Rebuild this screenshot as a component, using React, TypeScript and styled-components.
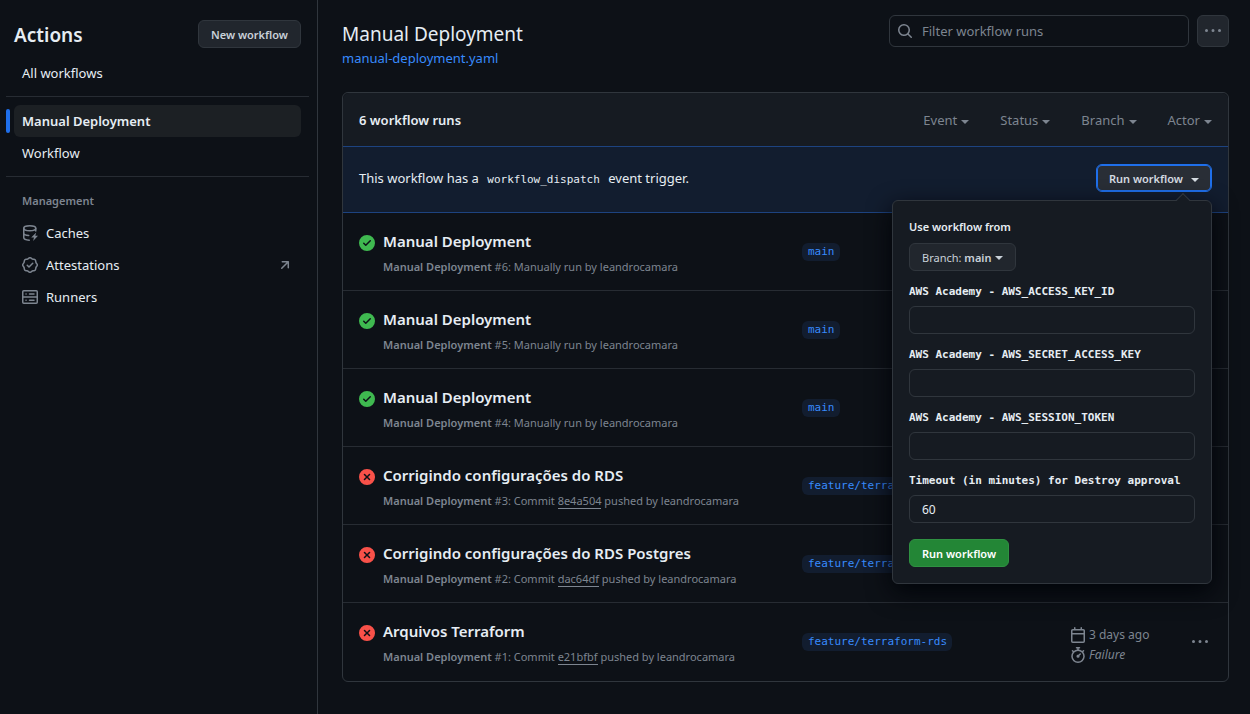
import React from "react";
import styled, { createGlobalStyle, css } from "styled-components";

const color = {
  canvas: "#0d1117",
  subtle: "#161b22",
  control: "#21262d",
  border: "#30363d",
  divider: "#272c33",
  text: "#e6edf3",
  muted: "#7d8590",
  accent: "#1f6feb",
  link: "#388bfd",
  accentBg: "#121d2f",
  accentBorder: "#1d4380",
  success: "#3fb950",
  danger: "#f85149",
};

const sans = `"Noto Sans", "Open Sans", sans-serif`;
const mono = `"DejaVu Sans Mono", "Liberation Mono", monospace`;

const GlobalStyle = createGlobalStyle`
  *, *::before, *::after { box-sizing: border-box; }
  body {
    margin: 0;
    background: ${color.canvas};
    color: ${color.text};
    font: 13px/20px ${sans};
  }
  button, input { font-family: inherit; color: inherit; margin: 0; }
  h1, h2, h3, p, ul { margin: 0; padding: 0; font-weight: 400; }
  ul { list-style: none; }
  a { color: inherit; text-decoration: none; }
  svg { display: block; flex: none; fill: currentColor; }
`;

/* ---------- icons ---------- */

const paths = {
  search:
    "M10.68 11.74a6 6 0 0 1-7.922-8.982 6 6 0 0 1 8.982 7.922l3.04 3.04a.749.749 0 0 1-.326 1.275.749.749 0 0 1-.734-.215ZM11.5 7a4.499 4.499 0 1 0-8.997 0A4.499 4.499 0 0 0 11.5 7Z",
  kebab:
    "M8 9a1.5 1.5 0 1 0 0-3 1.5 1.5 0 0 0 0 3ZM1.5 9a1.5 1.5 0 1 0 0-3 1.5 1.5 0 0 0 0 3Zm13 0a1.5 1.5 0 1 0 0-3 1.5 1.5 0 0 0 0 3Z",
  success:
    "M8 16A8 8 0 1 1 8 0a8 8 0 0 1 0 16Zm3.78-9.72a.751.751 0 0 0-.018-1.042.751.751 0 0 0-1.042-.018L6.75 9.19 5.28 7.72a.751.751 0 0 0-1.042.018.751.751 0 0 0-.018 1.042l2 2a.75.75 0 0 0 1.06 0Z",
  failure:
    "M2.343 13.657A8 8 0 1 1 13.658 2.343 8 8 0 0 1 2.343 13.657ZM6.03 4.97a.751.751 0 0 0-1.042.018.751.751 0 0 0-.018 1.042L6.94 8 4.97 9.97a.749.749 0 0 0 .326 1.275.749.749 0 0 0 .734-.215L8 9.06l1.97 1.97a.749.749 0 0 0 1.275-.326.749.749 0 0 0-.215-.734L9.06 8l1.97-1.97a.749.749 0 0 0-.326-1.275.749.749 0 0 0-.734.215L8 6.94Z",
  calendar:
    "M4.75 0a.75.75 0 0 1 .75.75V2h5V.75a.75.75 0 0 1 1.5 0V2h1.25c.966 0 1.75.784 1.75 1.75v10.5A1.75 1.75 0 0 1 13.25 16H2.75A1.75 1.75 0 0 1 1 14.25V3.75C1 2.784 1.784 2 2.75 2H4V.75A.75.75 0 0 1 4.75 0ZM2.5 7.5v6.75c0 .138.112.25.25.25h10.5a.25.25 0 0 0 .25-.25V7.5Zm10.75-4H2.75a.25.25 0 0 0-.25.25V6h11V3.75a.25.25 0 0 0-.25-.25Z",
  stopwatch:
    "M5.75.75A.75.75 0 0 1 6.5 0h3a.75.75 0 0 1 0 1.5h-.75v1l-.001.041a6.724 6.724 0 0 1 3.464 1.435l.007-.006.75-.75a.749.749 0 0 1 1.275.326.749.749 0 0 1-.215.734l-.75.75-.006.007a6.75 6.75 0 1 1-10.548 0L2.72 5.03l-.75-.75a.751.751 0 0 1 .018-1.042.751.751 0 0 1 1.042-.018l.75.75.007.006A6.72 6.72 0 0 1 7.25 2.541V1.5H6.5a.75.75 0 0 1-.75-.75ZM8 14.5a5.25 5.25 0 1 0-.001-10.501A5.25 5.25 0 0 0 8 14.5Zm.389-6.7 1.33-1.33a.75.75 0 1 1 1.061 1.06L9.45 8.861A1.503 1.503 0 0 1 8 10.75a1.499 1.499 0 1 1 .389-2.95Z",
  verified:
    "m9.585.52.929.68c.153.112.331.186.518.215l1.138.175a2.678 2.678 0 0 1 2.24 2.24l.174 1.139c.029.187.103.365.215.518l.68.928a2.677 2.677 0 0 1 0 3.17l-.68.928a1.174 1.174 0 0 0-.215.518l-.175 1.138a2.678 2.678 0 0 1-2.241 2.241l-1.138.175a1.17 1.17 0 0 0-.518.215l-.928.68a2.677 2.677 0 0 1-3.17 0l-.928-.68a1.174 1.174 0 0 0-.518-.215L3.83 14.41a2.678 2.678 0 0 1-2.24-2.24l-.175-1.138a1.17 1.17 0 0 0-.215-.518l-.68-.928a2.677 2.677 0 0 1 0-3.17l.68-.928c.112-.153.186-.331.215-.518l.175-1.14a2.678 2.678 0 0 1 2.24-2.24l1.139-.175c.187-.029.365-.103.518-.215l.928-.68a2.677 2.677 0 0 1 3.17 0ZM7.303 1.728l-.927.68a2.67 2.67 0 0 1-1.18.489l-1.137.174a1.179 1.179 0 0 0-.987.987l-.174 1.136a2.677 2.677 0 0 1-.489 1.18l-.68.928a1.18 1.18 0 0 0 0 1.394l.68.927c.256.348.424.753.489 1.18l.174 1.137c.078.509.478.909.987.987l1.136.174a2.67 2.67 0 0 1 1.18.489l.928.68c.414.305.979.305 1.394 0l.927-.68a2.67 2.67 0 0 1 1.18-.489l1.137-.174a1.18 1.18 0 0 0 .987-.987l.174-1.136a2.67 2.67 0 0 1 .489-1.18l.68-.928a1.176 1.176 0 0 0 0-1.394l-.68-.927a2.686 2.686 0 0 1-.489-1.18l-.174-1.137a1.179 1.179 0 0 0-.987-.987l-1.136-.174a2.677 2.677 0 0 1-1.18-.489l-.928-.68a1.176 1.176 0 0 0-1.394 0ZM11.28 6.78l-3.75 3.75a.75.75 0 0 1-1.06 0L4.72 8.78a.751.751 0 0 1 .018-1.042.751.751 0 0 1 1.042-.018L7 8.94l3.22-3.22a.751.751 0 0 1 1.042.018.751.751 0 0 1 .018 1.042Z",
  external:
    "M4.53 4.75A.75.75 0 0 1 5.28 4h6.01a.75.75 0 0 1 .75.75v6.01a.75.75 0 0 1-1.5 0v-4.2l-5.26 5.261a.749.749 0 0 1-1.275-.326.749.749 0 0 1 .215-.734L9.48 5.5h-4.2a.75.75 0 0 1-.75-.75Z",
};

const Icon = ({ name }: { name: keyof typeof paths }) => (
  <svg width="16" height="16" viewBox="0 0 16 16" aria-hidden="true">
    <path d={paths[name]} />
  </svg>
);

const OutlineSvg = styled.svg`
  fill: none;
  stroke: currentColor;
  stroke-width: 1.5;
  stroke-linecap: round;
  stroke-linejoin: round;
`;

const CacheIcon = () => (
  <OutlineSvg width="16" height="16" viewBox="0 0 16 16" aria-hidden="true">
    <ellipse cx="7.75" cy="3.25" rx="6" ry="2.5" />
    <path d="M1.75 3.25v9.25c0 1.3 2 2.5 5.5 2.7M1.75 8c0 1.2 2 2.3 5 2.5M13.75 3.25V6" />
    <path
      d="M14.2 7.4 9.2 12.6h2.8l-.9 3.4 4.9-5.2h-2.7Z"
      fill="currentColor"
      stroke="none"
    />
  </OutlineSvg>
);

const ServerIcon = () => (
  <OutlineSvg width="16" height="16" viewBox="0 0 16 16" aria-hidden="true">
    <rect x="0.75" y="1.75" width="14.5" height="12.5" rx="1" />
    <path d="M1 8h14M4 4.9h.1M7.5 4.9h4.5M4 11.2h.1M7.5 11.2h4.5" />
  </OutlineSvg>
);

/* ---------- shared controls ---------- */

const Caret = styled.span`
  display: inline-block;
  border: 4px solid transparent;
  border-top-color: currentColor;
  border-bottom-width: 0;
`;

const Button = styled.button<{ $primary?: boolean; $focused?: boolean }>`
  display: inline-flex;
  align-items: center;
  height: 28px;
  padding: 1px 12px 0;
  border: 1px solid ${color.border};
  border-radius: 6px;
  background: ${color.control};
  color: #c9d1d9;
  font-size: 11px;
  line-height: 20px;
  font-weight: 600;
  white-space: nowrap;
  ${(p) =>
    p.$primary &&
    css`
      border-color: #2f9142;
      background: #238636;
      color: #fff;
    `}
  ${(p) =>
    p.$focused &&
    css`
      border-color: ${color.accent};
      background: #292e36;
      box-shadow: inset 0 0 0 1px ${color.accent};
    `}
`;

const IconButton = styled.button<{ $framed?: boolean }>`
  display: inline-flex;
  align-items: center;
  justify-content: center;
  width: 24px;
  height: 24px;
  padding: 0;
  border: 0;
  background: none;
  color: ${color.muted};
  ${(p) =>
    p.$framed &&
    css`
      width: 32px;
      height: 32px;
      border: 1px solid ${color.border};
      border-radius: 6px;
      background: ${color.control};
    `}
`;

/* ---------- sidebar ---------- */

const Page = styled.div`
  display: flex;
  min-height: 100vh;
`;

const Sidebar = styled.aside`
  flex: none;
  width: 318px;
  padding: 20px 8px 16px 6px;
  border-right: 1px solid ${color.border};
`;

const SidebarHeader = styled.header`
  display: flex;
  align-items: flex-start;
  justify-content: space-between;
  padding: 0 8px;
  margin-bottom: 7px;
`;

const SidebarTitle = styled.h2`
  font-size: 19px;
  line-height: 30px;
  font-weight: 600;
`;

const NavList = styled.ul`
  padding: 0 8px;
`;

const NavLink = styled.a<{ $active?: boolean }>`
  position: relative;
  display: flex;
  align-items: center;
  gap: 8px;
  height: 32px;
  padding: 0 8px;
  border-radius: 6px;
  svg { color: ${color.muted}; }
  ${(p) =>
    p.$active &&
    css`
      background: #1c2024;
      font-weight: 600;
      &::before {
        content: "";
        position: absolute;
        left: -8px;
        top: 4px;
        width: 4px;
        height: 24px;
        border-radius: 2px;
        background: ${color.accent};
      }
    `}
`;

const NavLabel = styled.span`
  flex: 1;
`;

const Separator = styled.hr`
  height: 1px;
  margin: 7px 0 8px;
  border: 0;
  background: ${color.divider};
`;

const GroupTitle = styled.h3`
  padding: 6px 16px;
  color: ${color.muted};
  font-size: 11px;
  line-height: 20px;
  font-weight: 600;
`;

/* ---------- main ---------- */

const Main = styled.main`
  flex: 1;
  min-width: 0;
  padding: 15px 21px 32px 24px;
`;

const PageHeader = styled.header`
  display: flex;
  gap: 8px;
  margin-bottom: 24px;
`;

const Heading = styled.div`
  flex: 1;
  padding-top: 4px;
`;

const Title = styled.h1`
  font-size: 19px;
  line-height: 30px;
`;

const FileLink = styled.a`
  display: block;
  line-height: 19px;
  color: ${color.link};
`;

const SearchBox = styled.label`
  display: flex;
  align-items: center;
  gap: 9px;
  width: 300px;
  height: 32px;
  padding: 0 7px;
  border: 1px solid ${color.border};
  border-radius: 6px;
  color: ${color.muted};
`;

const SearchInput = styled.input`
  flex: 1;
  min-width: 0;
  padding: 0;
  border: 0;
  outline: 0;
  background: none;
  font-size: 13px;
  line-height: 20px;
  color: ${color.text};
  &::placeholder { color: ${color.muted}; opacity: 1; }
`;

const Panel = styled.section`
  border: 1px solid ${color.border};
  border-radius: 6px;
`;

const PanelHeader = styled.header`
  display: flex;
  align-items: center;
  justify-content: space-between;
  gap: 32px;
  padding: 17px 16px 16px;
  border-radius: 6px 6px 0 0;
  background: ${color.subtle};
`;

const RunCount = styled.strong`
  font-weight: 600;
`;

const Filters = styled.div`
  display: flex;
  gap: 31px;
`;

const FilterButton = styled.button`
  display: inline-flex;
  align-items: center;
  gap: 4px;
  padding: 0;
  border: 0;
  background: none;
  color: ${color.muted};
  font-size: 13px;
  line-height: 20px;
  ${Caret} { margin-top: 3px; }
`;

const Banner = styled.div`
  display: flex;
  align-items: flex-start;
  justify-content: space-between;
  padding: 17px 16px 20px;
  border: solid ${color.accentBorder};
  border-width: 1px 0;
  background: ${color.accentBg};
`;

const BannerText = styled.p`
  padding-top: 4px;
  code {
    padding: 0 5px;
    font: 11px/20px ${mono};
  }
`;

const Dispatch = styled.div`
  position: relative;
`;

const DispatchButton = styled(Button)`
  gap: 8px;
  color: #d5dbe1;
  ${Caret} { margin-top: 3px; }
`;

const Popover = styled.form`
  position: absolute;
  z-index: 1;
  top: 36px;
  right: 0;
  width: 320px;
  padding: 16px;
  border: 1px solid ${color.border};
  border-radius: 6px;
  background: ${color.subtle};
  box-shadow: 0 8px 24px #010409;
  &::before {
    content: "";
    position: absolute;
    top: -6px;
    right: 23px;
    width: 10px;
    height: 10px;
    border: solid ${color.border};
    border-width: 1px 0 0 1px;
    background: linear-gradient(135deg, ${color.subtle} 50%, transparent 50%);
    transform: rotate(45deg);
  }
`;

const PopoverTitle = styled.p`
  margin-bottom: 6px;
  font-size: 11px;
  line-height: 20px;
  font-weight: 600;
`;

const BranchButton = styled(Button)`
  gap: 4px;
  font-weight: 400;
  b { font-weight: 600; }
`;

const Field = styled.label`
  display: block;
  margin-top: 11px;
  font: 700 11px/20px ${mono};
`;

const FieldInput = styled.input`
  display: block;
  width: 100%;
  height: 28px;
  margin-top: 4px;
  padding: 0 12px;
  border: 1px solid ${color.border};
  border-radius: 6px;
  outline: 0;
  background: transparent;
  color: ${color.text};
  font: 12px/20px ${sans};
`;

const Submit = styled(Button)`
  margin-top: 16px;
`;

const RunRow = styled.li`
  display: grid;
  grid-template-columns: minmax(0, 443fr) minmax(0, 268fr) 118px 24px;
  align-items: center;
  min-height: 78px;
  padding: 0 16px;
  border-bottom: 1px solid ${color.divider};
  &:last-child { border-color: transparent; }
`;

const Summary = styled.div<{ $ok: boolean }>`
  display: flex;
  gap: 8px;
  padding-top: 3px;
  svg {
    margin-top: 6px;
    color: ${(p) => (p.$ok ? color.success : color.danger)};
  }
`;

const RunTitle = styled.a`
  display: block;
  font-size: 15px;
  line-height: 24px;
  font-weight: 600;
`;

const RunMeta = styled.p`
  margin-top: 4px;
  color: ${color.muted};
  font-size: 11px;
  line-height: 20px;
  b { font-weight: 600; }
  a { border-bottom: 1px solid currentColor; }
`;

const BranchCell = styled.div`
  display: flex;
`;

const BranchLabel = styled.a`
  padding: 0 5px 0 6px;
  border-radius: 6px;
  background: ${color.accentBg};
  color: ${color.link};
  font: 11px/18px ${mono};
  white-space: nowrap;
`;

const Timing = styled.div`
  padding-top: 6px;
  color: ${color.muted};
  font-size: 12px;
  line-height: 20px;
  span {
    display: flex;
    align-items: center;
    gap: 3px;
  }
`;

/* ---------- data ---------- */

interface Run {
  id: number;
  title: string;
  ok: boolean;
  branch: string;
  commit?: string;
  time?: string;
  outcome?: string;
}

const runs: Run[] = [
  { id: 6, title: "Manual Deployment", ok: true, branch: "main" },
  { id: 5, title: "Manual Deployment", ok: true, branch: "main" },
  { id: 4, title: "Manual Deployment", ok: true, branch: "main" },
  { id: 3, title: "Corrigindo configurações do RDS", ok: false, branch: "feature/terraform-rds", commit: "8e4a504" },
  { id: 2, title: "Corrigindo configurações do RDS Postgres", ok: false, branch: "feature/terraform-rds", commit: "dac64df" },
  {
    id: 1,
    title: "Arquivos Terraform",
    ok: false,
    branch: "feature/terraform-rds",
    commit: "e21bfbf",
    time: "3 days ago",
    outcome: "Failure",
  },
];

const fields = [
  { label: "AWS Academy - AWS_ACCESS_KEY_ID", value: "" },
  { label: "AWS Academy - AWS_SECRET_ACCESS_KEY", value: "" },
  { label: "AWS Academy - AWS_SESSION_TOKEN", value: "" },
  { label: "Timeout (in minutes) for Destroy approval", value: "60" },
];

export default function App() {
  return (
    <Page>
      <GlobalStyle />
      <Sidebar>
        <SidebarHeader>
          <SidebarTitle>Actions</SidebarTitle>
          <Button type="button">New workflow</Button>
        </SidebarHeader>
        <nav aria-label="Actions">
          <NavList>
            <li><NavLink href="#all">All workflows</NavLink></li>
          </NavList>
          <Separator />
          <NavList>
            <li><NavLink href="#manual" $active aria-current="page">Manual Deployment</NavLink></li>
            <li><NavLink href="#workflow">Workflow</NavLink></li>
          </NavList>
          <Separator />
          <GroupTitle>Management</GroupTitle>
          <NavList>
            <li><NavLink href="#caches"><CacheIcon />Caches</NavLink></li>
            <li>
              <NavLink href="#attestations">
                <Icon name="verified" />
                <NavLabel>Attestations</NavLabel>
                <Icon name="external" />
              </NavLink>
            </li>
            <li><NavLink href="#runners"><ServerIcon />Runners</NavLink></li>
          </NavList>
        </nav>
      </Sidebar>

      <Main>
        <PageHeader>
          <Heading>
            <Title>Manual Deployment</Title>
            <FileLink href="#file">manual-deployment.yaml</FileLink>
          </Heading>
          <SearchBox>
            <Icon name="search" />
            <SearchInput type="text" placeholder="Filter workflow runs" aria-label="Filter workflow runs" />
          </SearchBox>
          <IconButton type="button" $framed aria-label="Show workflow options">
            <Icon name="kebab" />
          </IconButton>
        </PageHeader>

        <Panel>
          <PanelHeader>
            <RunCount>6 workflow runs</RunCount>
            <Filters>
              {["Event", "Status", "Branch", "Actor"].map((name) => (
                <FilterButton type="button" key={name}>
                  {name}
                  <Caret />
                </FilterButton>
              ))}
            </Filters>
          </PanelHeader>

          <Banner>
            <BannerText>
              This workflow has a <code>workflow_dispatch</code> event trigger.
            </BannerText>
            <Dispatch>
              <DispatchButton type="button" $focused aria-expanded="true">
                Run workflow
                <Caret />
              </DispatchButton>
              <Popover>
                <PopoverTitle>Use workflow from</PopoverTitle>
                <BranchButton type="button">
                  <span>Branch: <b>main</b></span>
                  <Caret />
                </BranchButton>
                {fields.map((field) => (
                  <Field key={field.label}>
                    {field.label}
                    <FieldInput type="text" defaultValue={field.value} />
                  </Field>
                ))}
                <Submit type="button" $primary>Run workflow</Submit>
              </Popover>
            </Dispatch>
          </Banner>

          <ul>
            {runs.map((run) => (
              <RunRow key={run.id}>
                <Summary $ok={run.ok}>
                  <Icon name={run.ok ? "success" : "failure"} />
                  <div>
                    <RunTitle href={`#run-${run.id}`}>{run.title}</RunTitle>
                    <RunMeta>
                      <b>Manual Deployment</b> #{run.id}:{" "}
                      {run.commit ? (
                        <>Commit <a href={`#${run.commit}`}>{run.commit}</a> pushed by leandrocamara</>
                      ) : (
                        <>Manually run by leandrocamara</>
                      )}
                    </RunMeta>
                  </div>
                </Summary>
                <BranchCell>
                  <BranchLabel href={`#branch-${run.id}`}>{run.branch}</BranchLabel>
                </BranchCell>
                {run.time && (
                  <>
                    <Timing>
                      <span><Icon name="calendar" />{run.time}</span>
                      <span><Icon name="stopwatch" /><i>{run.outcome}</i></span>
                    </Timing>
                    <IconButton type="button" aria-label="Show options"><Icon name="kebab" /></IconButton>
                  </>
                )}
              </RunRow>
            ))}
          </ul>
        </Panel>
      </Main>
    </Page>
  );
}
